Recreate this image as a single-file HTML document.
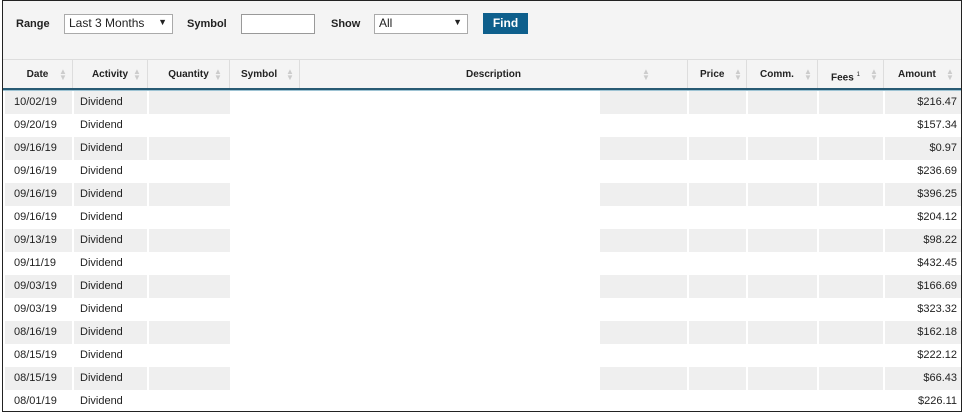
<!DOCTYPE html>
<html><head><meta charset="utf-8"><style>
*{margin:0;padding:0;box-sizing:border-box}
body{width:966px;height:415px;background:#fff;font-family:"Liberation Sans",Arial,sans-serif;font-size:11px;color:#222;position:relative;overflow:hidden}
.frame{position:absolute;left:2px;top:0;width:960px;height:412px;border:1px solid #222;background:#fff}
.top{position:absolute;left:3px;top:1px;width:958px;height:58px;background:#f4f4f4}
.lbl{position:absolute;font-weight:bold;font-size:11px;top:17px}
.sel{position:absolute;top:13px;height:20px;border:1px solid #aaa;background:#fff;font-size:12px;padding:1px 4px}
.btn{position:absolute;width:45px;height:21px;background:#0e5f8c;color:#fff;font-weight:bold;font-size:12px;text-align:center;line-height:20px}
.hdr{position:absolute;left:3px;top:59px;width:958px;height:30px;background:#f4f4f4;border-top:1px solid #ddd}
.h{position:absolute;top:0;height:29px;line-height:30px;font-weight:bold;font-size:10px;text-align:center;border-right:1px solid #ddd}
.h i{position:absolute;top:9px;width:8px;height:12px;font-style:normal;color:#ccc;font-size:8px;line-height:6px}
.rule{position:absolute;left:3px;top:88px;width:958px;height:3px;background:#285a73;border-bottom:1px solid #9ec3d3}
.row{position:absolute;left:3px;width:958px;height:23px;font-size:11px}
.c{position:absolute;top:0;height:23px;line-height:23px}
.g .gc{background:#efefef}
</style></head><body>
<div class="frame"></div>
<div class="top">
<div class="lbl" style="left:13px">Range</div>
<div class="sel" style="left:61px;width:109px">Last 3 Months<span style="position:absolute;right:5px;top:2px;font-size:9px">▼</span></div>
<div class="lbl" style="left:184px">Symbol</div>
<div class="sel" style="left:238px;width:74px;border-color:#999"></div>
<div class="lbl" style="left:328px">Show</div>
<div class="sel" style="left:371px;width:94px">All<span style="position:absolute;right:5px;top:2px;font-size:9px">▼</span></div>
<div class="btn" style="left:480px;top:12px">Find</div>
</div>
<div class="hdr">
<div class="h" style="left:0;width:70px">Date<i style="left:56px">▲<br>▼</i></div>
<div class="h" style="left:70px;width:75px">Activity<i style="left:60px">▲<br>▼</i></div>
<div class="h" style="left:145px;width:82px">Quantity<i style="left:66px">▲<br>▼</i></div>
<div class="h" style="left:227px;width:70px;text-align:left;padding-left:11px">Symbol<i style="left:56px">▲<br>▼</i></div>
<div class="h" style="left:297px;width:388px">Description<i style="left:342px">▲<br>▼</i></div>
<div class="h" style="left:685px;width:59px;text-align:left;padding-left:12px">Price<i style="left:46px">▲<br>▼</i></div>
<div class="h" style="left:744px;width:71px;text-align:left;padding-left:13px">Comm.<i style="left:57px">▲<br>▼</i></div>
<div class="h" style="left:815px;width:66px;text-align:left;padding-left:13px">Fees <sup style="font-size:6px;font-weight:normal">1</sup><i style="left:52px">▲<br>▼</i></div>
<div class="h" style="left:881px;width:77px;border-right:none;text-align:left;padding-left:14px">Amount<i style="left:62px">▲<br>▼</i></div>
</div>
<div class="rule"></div>
<div id="rows"></div>
<script>
var d=[["10/02/19","$216.47"],["09/20/19","$157.34"],["09/16/19","$0.97"],["09/16/19","$236.69"],["09/16/19","$396.25"],["09/16/19","$204.12"],["09/13/19","$98.22"],["09/11/19","$432.45"],["09/03/19","$166.69"],["09/03/19","$323.32"],["08/16/19","$162.18"],["08/15/19","$222.12"],["08/15/19","$66.43"],["08/01/19","$226.11"]];
var h="";
d.forEach(function(r,i){
h+='<div class="row'+(i%2==0?' g':'')+'" style="top:'+(91+i*23)+'px">'+
'<div class="c gc" style="left:2px;width:67px;padding-left:9px">'+r[0]+'</div>'+
'<div class="c gc" style="left:71px;width:73px;padding-left:6px">Dividend</div>'+
'<div class="c gc" style="left:146px;width:81px"></div>'+
'<div class="c gc" style="left:597px;width:87px"></div>'+
'<div class="c gc" style="left:686px;width:57px"></div>'+
'<div class="c gc" style="left:745px;width:69px"></div>'+
'<div class="c gc" style="left:816px;width:64px"></div>'+
'<div class="c gc" style="left:882px;width:76px;text-align:right;padding-right:4px">'+r[1]+'</div></div>';
});
document.getElementById("rows").innerHTML=h;
</script>
</body></html>
